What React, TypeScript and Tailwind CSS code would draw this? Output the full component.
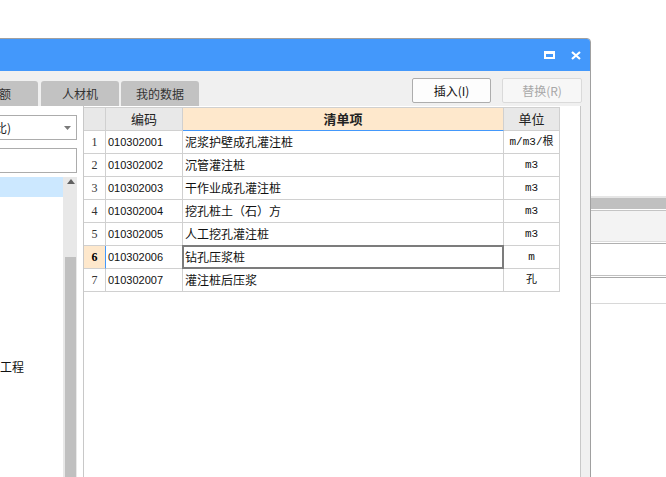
import React from 'react';

const rows = [
  { no: 1, code: '010302001', name: '泥浆护壁成孔灌注桩', unit: 'm/m3/根' },
  { no: 2, code: '010302002', name: '沉管灌注桩', unit: 'm3' },
  { no: 3, code: '010302003', name: '干作业成孔灌注桩', unit: 'm3' },
  { no: 4, code: '010302004', name: '挖孔桩土（石）方', unit: 'm3' },
  { no: 5, code: '010302005', name: '人工挖孔灌注桩', unit: 'm3' },
  { no: 6, code: '010302006', name: '钻孔压浆桩', unit: 'm' },
  { no: 7, code: '010302007', name: '灌注桩后压浆', unit: '孔' },
];

const cjk = "font-['Noto_Sans_CJK_SC','Noto_Sans',sans-serif]";

const BackWindow: React.FC = () => (
  <div className="absolute left-[560px] top-[196px] w-[120px] h-[300px] flex flex-col bg-white">
    <div className="h-[2px] bg-[#e6e6e6]" />
    <div className="h-[11px] bg-[#c0c0c0]" />
    <div className="h-px bg-white" />
    <div className="h-px bg-[#c4c4c4]" />
    <div className="h-[30px] bg-[#f3f3f3]" />
    <div className="h-px bg-[#dcdcdc]" />
    <div className="h-px bg-white" />
    <div className="h-px bg-[#b0b0b0]" />
    <div className="h-px bg-white" />
    <div className="h-[30px]" />
    <div className="h-px bg-[#c0c0c0]" />
    <div className="h-px bg-white" />
    <div className="h-px bg-[#a8a8a8]" />
    <div className="h-[25px]" />
    <div className="h-px bg-[#d8d8d8]" />
  </div>
);

const Tab: React.FC<{ label: string; className?: string }> = ({ label, className }) => (
  <div
    className={`h-[25px] w-[78px] rounded-t-[3px] bg-[#c2c2c2] flex items-center justify-center text-[12px] text-[#333] ${cjk} ${className ?? ''}`}
  >
    {label}
  </div>
);

export default function App() {
  return (
    <div className="relative w-[666px] h-[477px] overflow-hidden bg-white">
      <BackWindow />

      {/* Dialog */}
      <div className="absolute left-[-1px] top-[38px] w-[592px] h-[450px] border border-[#a0a0a0] rounded-tr-[4px] overflow-hidden bg-[#f0f0f0] flex flex-col">
        {/* Title bar */}
        <div className="h-[32px] bg-[#4398fb] flex items-center justify-end pr-[9px] gap-[16px]">
          <span className="block w-[11px] h-[8px] border-2 border-t-[3px] border-white" />
          <svg width="10" height="9" viewBox="0 0 10 9" className="block text-white">
            <path d="M1 1 L9 8 M9 1 L1 8" stroke="currentColor" strokeWidth="2.2" />
          </svg>
        </div>

        {/* Tabs and buttons */}
        <div className="h-[35px] flex justify-between">
          <div className="flex items-end">
            <Tab label="定额" className="-ml-[40px]" />
            <Tab label="人材机" className="ml-[3px]" />
            <Tab label="我的数据" className="ml-[2px]" />
          </div>
          <div className={`flex gap-[11px] pt-[7px] pr-[8px] ${cjk} text-[12px]`}>
            <button className="h-[25px] w-[79px] rounded-[2px] border border-[#adadad] bg-[#fdfdfd] text-[#111]">
              插入(I)
            </button>
            <button className="h-[25px] w-[80px] rounded-[2px] border border-[#dadada] bg-[#f7f7f7] text-[#a8a8a8]">
              替换(R)
            </button>
          </div>
        </div>

        {/* Main */}
        <div className="flex-1 flex bg-white">
          {/* Left panel */}
          <div className="w-[83px] flex flex-col">
            <div className="mt-[9px] w-[77px] h-[25px] border-y border-r border-[#acacac] flex items-center justify-between pr-[5px]">
              <span className={`-ml-[5px] text-[12px] text-[#222] ${cjk}`}>比)</span>
              <svg width="7" height="4" viewBox="0 0 7 4">
                <path d="M0 0 H7 L3.5 4 Z" fill="#7a7a7a" />
              </svg>
            </div>
            <div className="mt-[8px] w-[77px] h-[25px] border-y border-r border-[#acacac]" />
            <div className="mt-[4px] flex flex-1">
              <div className="w-[63px] flex flex-col">
                <div className="h-[20px] bg-[#cce8ff]" />
                {Array.from({ length: 8 }).map((_, i) => (
                  <div key={i} className="h-[20px]" />
                ))}
                <div className={`h-[20px] flex items-center text-[12px] text-[#111] ${cjk}`}>工程</div>
              </div>
              <div className="w-[14px] bg-[#e8e8e8] flex flex-col pl-[2px] pr-[1px]">
                <div className="h-[17px] flex items-start justify-center pt-[1px]">
                  <svg width="8" height="5" viewBox="0 0 8 5" className="mt-[1px]">
                    <path d="M0 5 H8 L4 0 Z" fill="#606060" />
                  </svg>
                </div>
                <div className="mt-[63px] flex-1 bg-[#c0c0c0]" />
              </div>
            </div>
          </div>

          {/* Table */}
          <div className="w-[498px] border-x border-[#c8c8c8] pt-px">
            <div className="grid grid-cols-[22px_77px_321px_56px] w-[476px]">
              <div className="h-[24px] border-y border-r border-[#d0d0d0] bg-[#e8e8e8]" />
              <div className={`h-[24px] border-y border-r border-[#d0d0d0] bg-[#e8e8e8] flex items-center justify-center text-[13px] text-[#222] ${cjk}`}>
                编码
              </div>
              <div className={`h-[24px] border-t border-r border-[#d0d0d0] border-b border-b-[#4398fb] bg-[#fee8cc] flex items-center justify-center text-[13px] font-bold text-[#222] ${cjk}`}>
                清单项
              </div>
              <div className={`h-[24px] border-y border-r border-[#d0d0d0] bg-[#e8e8e8] flex items-center justify-center text-[13px] text-[#222] ${cjk}`}>
                单位
              </div>

              {rows.map((r) => {
                const active = r.no === 6;
                return (
                  <React.Fragment key={r.no}>
                    <div
                      className={`h-[23px] border-b border-r border-[#d0d0d0] flex items-center justify-center text-[12px] font-['Liberation_Serif',serif] ${
                        active ? 'bg-[#fee8cc] font-bold border-r-[#4398fb]' : 'text-[#333]'
                      }`}
                    >
                      {r.no}
                    </div>
                    <div className="h-[23px] border-b border-r border-[#d0d0d0] flex items-center pl-[2px] text-[11px] text-[#111] font-['Liberation_Sans',sans-serif]">
                      {r.code}
                    </div>
                    <div className={`relative h-[23px] border-b border-r border-[#d0d0d0] flex items-center pl-[2px] text-[12px] text-[#111] ${cjk}`}>
                      {r.name}
                      {active && (
                        <div className="absolute -top-px -left-px -right-px -bottom-px border-2 border-[#7c7c7c]" />
                      )}
                    </div>
                    <div
                      className={`h-[23px] border-b border-r border-[#d0d0d0] flex items-center justify-center text-[11px] text-[#111] font-['Liberation_Mono','Noto_Sans_CJK_SC',monospace]`}
                    >
                      {r.unit}
                    </div>
                  </React.Fragment>
                );
              })}
            </div>
          </div>

          <div className="flex-1 bg-[#f0f0f0]" />
        </div>
      </div>
    </div>
  );
}
